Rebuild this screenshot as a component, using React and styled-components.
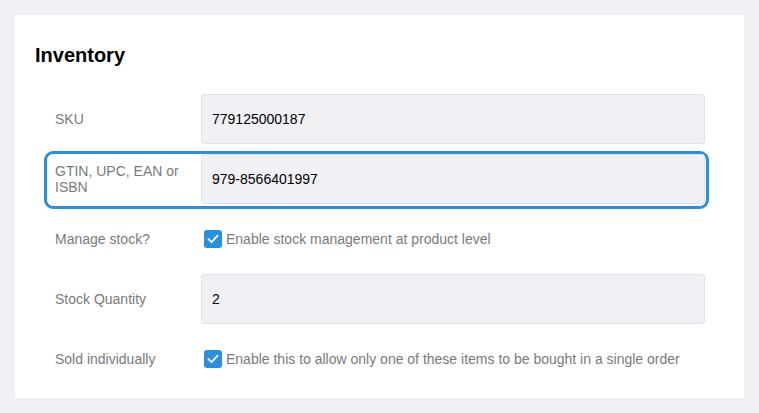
import React, { useState } from "react";
import styled, { createGlobalStyle } from "styled-components";

const GlobalStyle = createGlobalStyle`
  html, body {
    margin: 0;
    padding: 0;
    background: #f0f0f4;
    font-family: "Liberation Sans", Arial, sans-serif;
  }
`;

const Page = styled.div`
  padding: 15px;
  width: 759px;
  height: 413px;
  box-sizing: border-box;
`;

const Card = styled.div`
  background: #ffffff;
  width: 729px;
  box-sizing: border-box;
  padding: 29px 35px 9px 20px;
`;

const Heading = styled.h2`
  margin: 0;
  font-size: 20px;
  font-weight: bold;
  color: #000;
  line-height: 22px;
`;

const Rows = styled.div`
  display: flex;
  flex-direction: column;
  gap: 2px;
  margin: 25px 0 0 9px;
`;

const Row = styled.div`
  display: grid;
  grid-template-columns: 146px 1fr;
  align-items: center;
  height: 58px;
  box-sizing: border-box;
  padding: 0 1px 2px 8px;
  border: 3px solid ${(p) => (p.$focused ? "#2990dd" : "transparent")};
  border-radius: 9px;
`;

const Label = styled.label`
  font-size: 14px;
  line-height: 16px;
  color: #7a7a7a;
  max-width: 130px;
`;

const Input = styled.input`
  height: 50px;
  box-sizing: border-box;
  width: 100%;
  background: #f1f0f5;
  border: 1px solid #e3e2e7;
  border-radius: 3px;
  padding: 0 10px;
  font-family: inherit;
  font-size: 14px;
  color: #000;
  outline: none;
`;

const CheckLine = styled.label`
  display: flex;
  align-items: center;
  gap: 4px;
  padding-left: 3px;
  font-size: 14px;
  color: #7a7a7a;
  cursor: pointer;
`;

const Box = styled.span`
  width: 18px;
  height: 18px;
  border-radius: 3px;
  background: #2990dd;
  display: inline-flex;
  align-items: center;
  justify-content: center;
  flex-shrink: 0;
`;

const Check = () => (
  <Box>
    <svg width="14" height="14" viewBox="0 0 14 14" fill="none">
      <path
        d="M2.5 7.2 L5.6 10.2 L11.6 3.6"
        stroke="#fff"
        strokeWidth="1.8"
        strokeLinecap="round"
        strokeLinejoin="round"
      />
    </svg>
  </Box>
);

export default function App() {
  const [focused, setFocused] = useState("gtin");
  const [values, setValues] = useState({
    sku: "779125000187",
    gtin: "979-8566401997",
    qty: "2",
  });

  const change = (key) => (e) => setValues({ ...values, [key]: e.target.value });

  return (
    <>
      <GlobalStyle />
      <Page>
        <Card>
          <Heading>Inventory</Heading>
          <Rows>
            <Row $focused={focused === "sku"}>
              <Label>SKU</Label>
              <Input
                value={values.sku}
                onChange={change("sku")}
                onFocus={() => setFocused("sku")}
              />
            </Row>
            <Row $focused={focused === "gtin"}>
              <Label>GTIN, UPC, EAN or ISBN</Label>
              <Input
                value={values.gtin}
                onChange={change("gtin")}
                onFocus={() => setFocused("gtin")}
              />
            </Row>
            <Row>
              <Label>Manage stock?</Label>
              <CheckLine>
                <Check />
                Enable stock management at product level
              </CheckLine>
            </Row>
            <Row $focused={focused === "qty"}>
              <Label>Stock Quantity</Label>
              <Input
                value={values.qty}
                onChange={change("qty")}
                onFocus={() => setFocused("qty")}
              />
            </Row>
            <Row>
              <Label>Sold individually</Label>
              <CheckLine>
                <Check />
                Enable this to allow only one of these items to be bought in a single order
              </CheckLine>
            </Row>
          </Rows>
        </Card>
      </Page>
    </>
  );
}
